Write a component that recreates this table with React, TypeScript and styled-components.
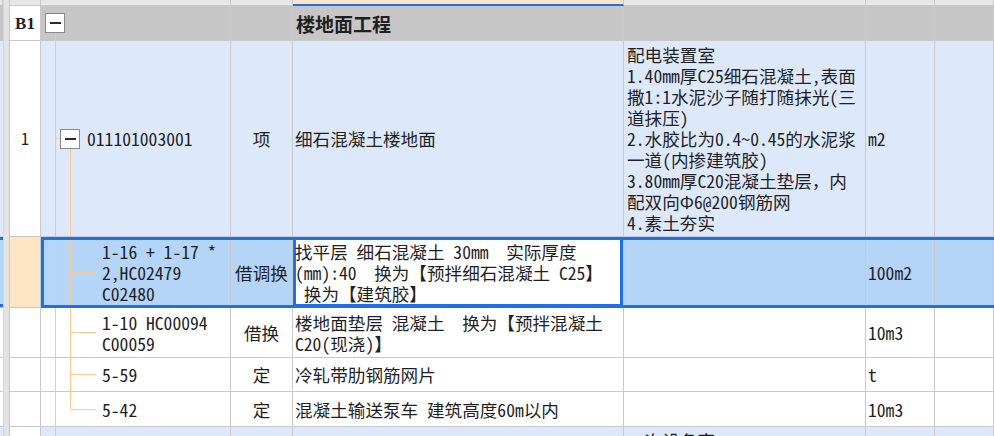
import React from "react";
import styled, { createGlobalStyle } from "styled-components";

const FONT = `"Noto Sans Mono CJK SC", "Noto Sans CJK SC", "Liberation Mono", monospace`;

const C = {
  grid: "#c9c9c9",
  group: "#c6c6c6",
  light: "#dde9fb",
  sel: "#b4d4f8",
  blue: "#1f6fea",
  peach: "#fde5c6",
  tree: "#f8c88f",
  head: "#e6e6e6",
  text: "#1f1f1f",
};

const GlobalStyle = createGlobalStyle`
  *, *::before, *::after { box-sizing: border-box; }
  html, body { margin: 0; padding: 0; background: #fff; overflow: hidden; }
  body { font-family: ${FONT}; color: ${C.text}; }
`;

type Tone = "head" | "group" | "light" | "sel" | "plain" | "peach";
const BG: Record<Tone, string> = {
  head: C.head,
  group: C.group,
  light: C.light,
  sel: C.sel,
  plain: "#ffffff",
  peach: C.peach,
};

const Sheet = styled.div`
  width: 994px;
  height: 436px;
  overflow: hidden;
  display: flex;
  flex-direction: column;
`;

const Row = styled.div<{ $h: number }>`
  position: relative;
  flex: none;
  height: ${(p) => p.$h}px;
  display: grid;
  grid-template-columns: 3px 7px 31px 190px 62px 331px 242px 69px 1fr;
`;

const Cell = styled.div<{ $tone: Tone }>`
  background: ${(p) => BG[p.$tone]};
  border-right: 1px solid ${C.grid};
  border-bottom: 1px solid ${C.grid};
  display: flex;
  align-items: center;
  min-width: 0;
  overflow: hidden;
  font-size: 17.6px;
  line-height: 21px;
  white-space: pre;
`;

const Stub = styled(Cell)<{ $sel?: boolean }>`
  border-right: none;
  ${(p) => (p.$sel ? `box-shadow: inset 0 3px 0 ${C.blue}, inset 0 -3px 0 ${C.blue};` : "")}
`;

const Splitter = styled.div`
  background: #e3e3e3;
  border-left: 1px solid #d6d6d6;
  border-right: 1px solid #c4c4c4;
`;

const NumCell = styled(Cell)`
  justify-content: center;
  font-size: 16px;
`;

const CodeCell = styled(Cell)`
  align-items: stretch;
`;

const TypeCell = styled(Cell)`
  justify-content: center;
`;

const NameCell = styled(Cell)<{ $current?: boolean }>`
  padding-left: 2px;
  ${(p) => (p.$current ? `box-shadow: inset 0 0 0 3px ${C.blue};` : "")}
`;

const DescCell = styled(Cell)`
  align-items: flex-start;
  padding: 3px 0 0 3px;
`;

const UnitCell = styled(Cell)`
  padding-left: 2px;
`;

const FillCell = styled(Cell)``;

const HeadCell = styled.div<{ $active?: boolean }>`
  background: ${(p) => (p.$active ? C.peach : C.head)};
  border-right: 1px solid ${C.grid};
  border-bottom: ${(p) => (p.$active ? `2px solid ${C.blue}` : `1px solid ${C.grid}`)};
`;

const SelectionFrame = styled.div`
  position: absolute;
  top: 0;
  bottom: 0;
  left: 41px;
  right: -3px;
  border: 3px solid ${C.blue};
  pointer-events: none;
`;

/* tree guides */
const Indent = styled.div<{ $w: number }>`
  width: ${(p) => p.$w}px;
  flex: none;
`;

const Rail = styled.div<{ $end?: boolean }>`
  width: 15px;
  flex: none;
  display: flex;
  flex-direction: column;
  &::before {
    content: "";
    flex: 1;
    border-right: 1px solid ${C.tree};
  }
  &::after {
    content: "";
    flex: 1;
    border-right: 1px solid ${(p) => (p.$end ? "transparent" : C.tree)};
  }
`;

const Connector = styled.div<{ $w: number }>`
  width: ${(p) => p.$w}px;
  height: 1px;
  flex: none;
  align-self: center;
  background: ${C.tree};
`;

const Node = styled.div`
  width: 20px;
  flex: none;
  display: flex;
  flex-direction: column;
  &::before {
    content: "";
    flex: 1;
  }
  &::after {
    content: "";
    flex: 1;
    width: 11px;
    border-right: 1px solid ${C.tree};
  }
`;

const Toggle = styled.span`
  width: 20px;
  height: 20px;
  flex: none;
  border: 1px solid #8a8a8a;
  background: #fff;
  display: flex;
  align-items: center;
  justify-content: center;
  &::before {
    content: "";
    width: 11px;
    height: 2px;
    background: #2b2b2b;
  }
`;

const CodeText = styled.div<{ $gap: number }>`
  margin-left: ${(p) => p.$gap}px;
  align-self: center;
`;

const TextLine = styled.div`
  white-space: pre;
`;

const GroupTitle = styled.span`
  font-weight: bold;
  font-size: 19px;
  padding-left: 1px;
`;

const GroupNo = styled.span`
  font-weight: bold;
  font-size: 17px;
  font-family: "Liberation Serif", ${FONT};
`;

const Lines = ({ items }: { items: string[] }) => (
  <div>
    {items.map((t, i) => (
      <TextLine key={i}>{t}</TextLine>
    ))}
  </div>
);

const Leaf = ({ lines, end }: { lines: string[]; end?: boolean }) => (
  <>
    <Rail />
    <Rail $end={end} />
    <Connector $w={25} />
    <CodeText $gap={6}>
      <Lines items={lines} />
    </CodeText>
  </>
);

const DESC1 = [
  "配电装置室",
  "1.40mm厚C25细石混凝土,表面",
  "撒1:1水泥沙子随打随抹光(三",
  "道抹压)",
  "2.水胶比为0.4~0.45的水泥浆",
  "一道(内掺建筑胶)",
  "3.80mm厚C20混凝土垫层，内",
  "配双向Φ6@200钢筋网",
  "4.素土夯实",
];

export default function App() {
  return (
    <>
      <GlobalStyle />
      <Sheet>
        <Row $h={6}>
          <HeadCell />
          <Splitter />
          <HeadCell />
          <HeadCell />
          <HeadCell />
          <HeadCell $active />
          <HeadCell />
          <HeadCell />
          <HeadCell />
        </Row>

        <Row $h={35}>
          <Stub $tone="group" />
          <Splitter />
          <NumCell $tone="plain">
            <GroupNo>B1</GroupNo>
          </NumCell>
          <CodeCell $tone="group">
            <Indent $w={4} />
            <Node>
              <Toggle />
            </Node>
          </CodeCell>
          <TypeCell $tone="group" />
          <NameCell $tone="group">
            <GroupTitle>楼地面工程</GroupTitle>
          </NameCell>
          <DescCell $tone="group" />
          <UnitCell $tone="group" />
          <FillCell $tone="group" />
        </Row>

        <Row $h={196}>
          <Stub $tone="light" />
          <Splitter />
          <NumCell $tone="plain">1</NumCell>
          <CodeCell $tone="light">
            <Rail />
            <Connector $w={4} />
            <Node>
              <Toggle />
            </Node>
            <CodeText $gap={7}>011101003001</CodeText>
          </CodeCell>
          <TypeCell $tone="light">项</TypeCell>
          <NameCell $tone="light">细石混凝土楼地面</NameCell>
          <DescCell $tone="light">
            <Lines items={DESC1} />
          </DescCell>
          <UnitCell $tone="light">m2</UnitCell>
          <FillCell $tone="light" />
        </Row>

        <Row $h={71}>
          <Stub $tone="sel" $sel />
          <Splitter />
          <NumCell $tone="peach" />
          <CodeCell $tone="sel">
            <Leaf lines={["1-16 + 1-17 *", "2,HC02479", "C02480"]} />
          </CodeCell>
          <TypeCell $tone="sel">借调换</TypeCell>
          <NameCell $tone="plain" $current>
            <Lines
              items={[
                "找平层 细石混凝土 30mm  实际厚度",
                "(mm):40  换为【预拌细石混凝土 C25】",
                " 换为【建筑胶】",
              ]}
            />
          </NameCell>
          <DescCell $tone="sel" />
          <UnitCell $tone="sel">100m2</UnitCell>
          <FillCell $tone="sel" />
          <SelectionFrame />
        </Row>

        <Row $h={50}>
          <Stub $tone="plain" />
          <Splitter />
          <NumCell $tone="plain" />
          <CodeCell $tone="plain">
            <Leaf lines={["1-10 HC00094", "C00059"]} />
          </CodeCell>
          <TypeCell $tone="plain">借换</TypeCell>
          <NameCell $tone="plain">
            <Lines items={["楼地面垫层 混凝土  换为【预拌混凝土", "C20(现浇)】"]} />
          </NameCell>
          <DescCell $tone="plain" />
          <UnitCell $tone="plain">10m3</UnitCell>
          <FillCell $tone="plain" />
        </Row>

        <Row $h={34}>
          <Stub $tone="plain" />
          <Splitter />
          <NumCell $tone="plain" />
          <CodeCell $tone="plain">
            <Leaf lines={["5-59"]} />
          </CodeCell>
          <TypeCell $tone="plain">定</TypeCell>
          <NameCell $tone="plain">冷轧带肋钢筋网片</NameCell>
          <DescCell $tone="plain" />
          <UnitCell $tone="plain">t</UnitCell>
          <FillCell $tone="plain" />
        </Row>

        <Row $h={35}>
          <Stub $tone="plain" />
          <Splitter />
          <NumCell $tone="plain" />
          <CodeCell $tone="plain">
            <Leaf lines={["5-42"]} end />
          </CodeCell>
          <TypeCell $tone="plain">定</TypeCell>
          <NameCell $tone="plain">混凝土输送泵车 建筑高度60m以内</NameCell>
          <DescCell $tone="plain" />
          <UnitCell $tone="plain">10m3</UnitCell>
          <FillCell $tone="plain" />
        </Row>

        <Row $h={80}>
          <Stub $tone="light" />
          <Splitter />
          <NumCell $tone="plain" />
          <CodeCell $tone="light">
            <Rail />
          </CodeCell>
          <TypeCell $tone="light" />
          <NameCell $tone="light" />
          <DescCell $tone="light">
            <Lines items={["二次设备室"]} />
          </DescCell>
          <UnitCell $tone="light" />
          <FillCell $tone="light" />
        </Row>
      </Sheet>
    </>
  );
}
